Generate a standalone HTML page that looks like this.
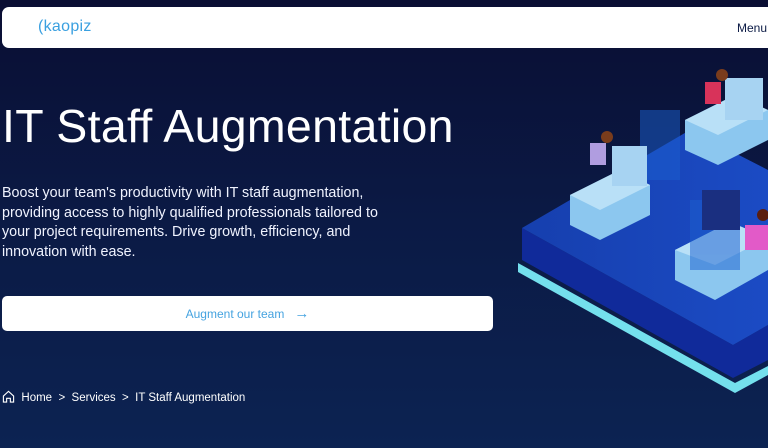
<!DOCTYPE html>
<html><head><meta charset="utf-8"><style>
*{margin:0;padding:0;box-sizing:border-box}
body{width:768px;height:448px;overflow:hidden;font-family:"Liberation Sans",sans-serif;background:linear-gradient(180deg,#0a0e33 0%,#0b1a45 50%,#0c2352 100%);position:relative;color:#fff}
.nav{position:absolute;left:2px;top:7px;width:780px;height:41px;background:#fff;border-radius:7px}
.logo{position:absolute;left:36px;top:11px;font-size:16px;color:#3aa0e0;letter-spacing:.3px}
.menu{position:absolute;left:735px;top:14px;font-size:12px;color:#0b1a45}
h1{position:absolute;left:2px;top:99px;font-size:46.5px;font-weight:normal;letter-spacing:.3px;white-space:nowrap}
p{position:absolute;left:2px;top:184px;width:400px;font-size:14.3px;line-height:19.5px;color:#f0f3ff}
.btn{position:absolute;left:2px;top:296px;width:491px;height:35px;background:#fff;border-radius:5px;color:#45a3e0;font-size:12px;text-align:center;line-height:35px}
.bc{position:absolute;left:2px;top:390px;font-size:11.5px;color:#fff;white-space:nowrap}
</style></head><body>
<svg style="position:absolute;left:0;top:0" width="768" height="448">
<defs><linearGradient id="g" x1="0" x2="1"><stop offset="0" stop-color="#163fae"/><stop offset="1" stop-color="#1b4bc4"/></linearGradient></defs>
<polygon points="518,263 735,383 768,366 768,375 735,393 518,272" fill="#7ff5ff" opacity=".9"/>
<polygon points="522,260 733,378 768,360 768,325 733,345 522,228" fill="#102a9a"/>
<polygon points="522,228 690,130 768,170 768,325 733,345" fill="url(#g)"/>
<g fill="#8cc7ef">
<polygon points="570,195 620,170 650,185 650,215 600,240 570,225"/>
<polygon points="685,120 735,95 768,110 768,140 718,165 685,150"/>
<polygon points="675,250 730,222 768,238 768,270 715,300 675,280"/>
</g>
<g fill="#b9e0f7">
<polygon points="570,195 620,170 650,185 600,210"/>
<polygon points="685,120 735,95 768,110 718,135"/>
<polygon points="675,250 730,222 768,238 715,265"/>
</g>
<g fill="#1a5fd0" opacity=".5">
<rect x="640" y="110" width="40" height="70"/><rect x="690" y="200" width="50" height="70"/>
</g>
<rect x="612" y="146" width="35" height="40" fill="#a7d3f2"/>
<rect x="725" y="78" width="38" height="42" fill="#a7d3f2"/>
<rect x="702" y="190" width="38" height="40" fill="#1a2f80"/>
<circle cx="607" cy="137" r="6" fill="#7a3c1c"/><rect x="590" y="143" width="16" height="22" fill="#b09de0"/>
<circle cx="722" cy="75" r="6" fill="#7a3c1c"/><rect x="705" y="82" width="16" height="22" fill="#d8335a"/>
<circle cx="763" cy="215" r="6" fill="#5a1e10"/><rect x="745" y="225" width="23" height="25" fill="#e25ac8"/>
</svg>
<div class="nav"><div class="logo">(kaopiz</div><div class="menu">Menu</div></div>
<h1>IT Staff Augmentation</h1>
<p>Boost your team's productivity with IT staff augmentation, providing access to highly qualified professionals tailored to your project requirements. Drive growth, efficiency, and innovation with ease.</p>
<div class="btn">Augment our team &nbsp;&nbsp;<span style="font-size:15px">→</span></div>
<div class="bc"><svg width="13" height="13" viewBox="0 0 14 14" style="vertical-align:-2px"><path d="M1.5 6.5L7 1.5l5.5 5V13H9V9H5v4H1.5z" fill="none" stroke="#fff" stroke-width="1.2"/></svg>&nbsp; Home &nbsp;&gt;&nbsp; Services &nbsp;&gt;&nbsp; IT Staff Augmentation</div>
</body></html>
